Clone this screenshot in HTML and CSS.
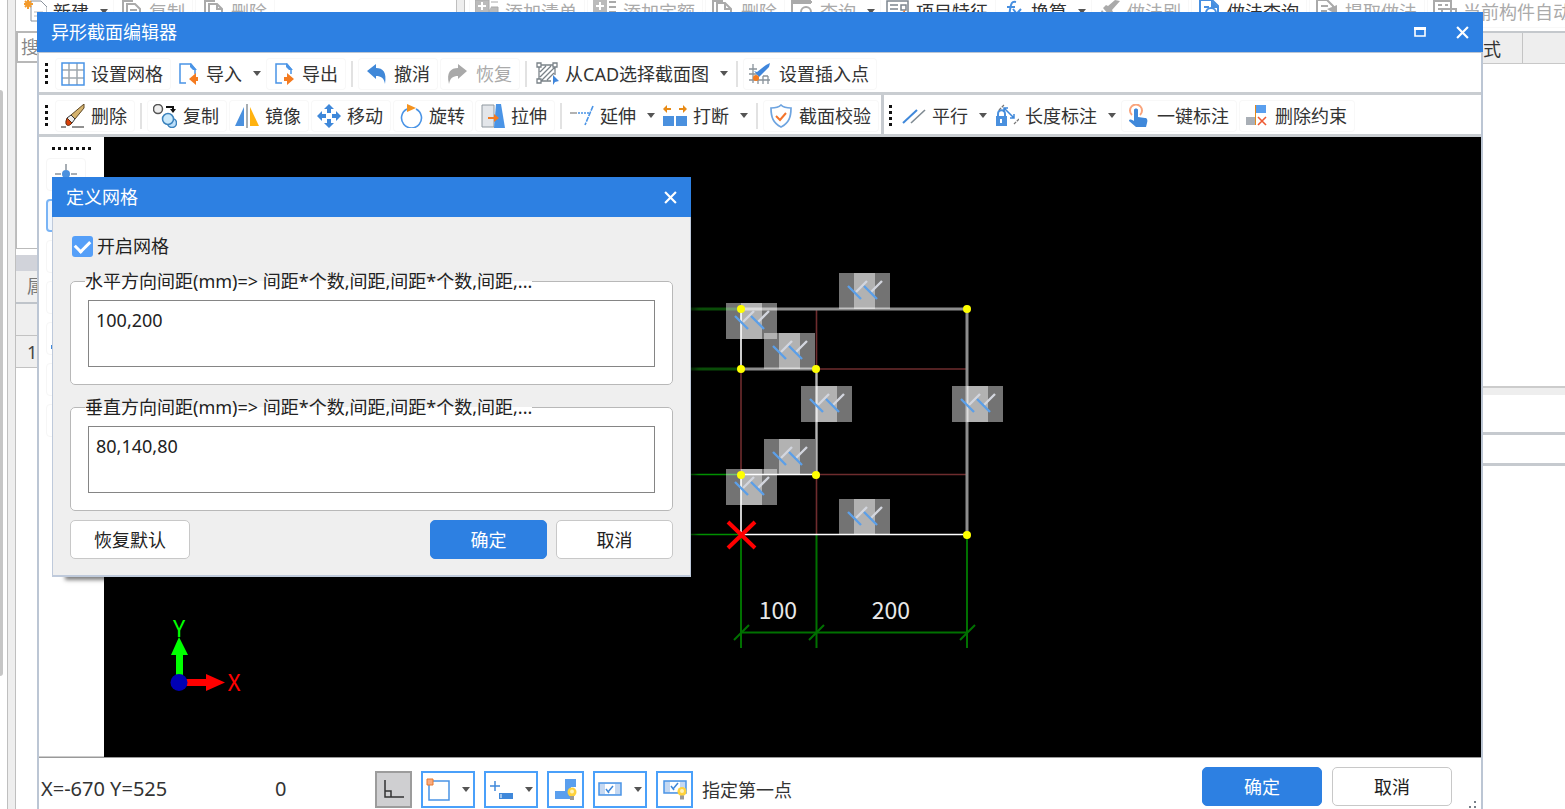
FILE: index.html
```html
<!DOCTYPE html>
<html lang="zh-CN">
<head>
<meta charset="utf-8">
<title>异形截面编辑器</title>
<link rel="stylesheet" href="styles.css">
</head>
<body>
<svg class="defs" aria-hidden="true">
  <symbol id="caret" viewBox="0 0 8 5"><path d="M0 0h8L4 5z" fill="#555"/></symbol>
  <symbol id="close" viewBox="0 0 12 12"><path d="M1 1l10 10M11 1L1 11" stroke="#fff" stroke-width="2"/></symbol>
  <symbol id="bulb" viewBox="0 0 10 14"><circle cx="5" cy="5" r="4.5" fill="#ffd23c"/><circle cx="5" cy="4.5" r="2" fill="#fff3b8"/><path d="M3 9h4v4H3z" fill="#999"/></symbol>
  <symbol id="mark" viewBox="0 0 51 36">
    <path d="M0 0h51v36H0z" fill="#fff" fill-opacity=".45"/><path d="M15 0h21v36H15z" fill="#fff" fill-opacity=".45"/>
    <path d="M17 19L28 8M32 19L43 8" stroke="#d3d6de" stroke-width="2.4"/>
    <path d="M9 13l13 13M25 13l13 13" stroke="#5c9fe8" stroke-width="2.4"/>
  </symbol>
</svg>

<main class="desktop">
  <div class="rail"><div class="thumb"></div></div>
  <div class="splitter"></div>
  <section class="left-pane">
    <div class="back-tools">
      <button class="tool drop"><svg class="ic" viewBox="0 0 24 24"><path d="M8 1h10l6 6v14H8z" fill="#fff" stroke="#8a929c"/><path d="M11 12h9M11 16h9" stroke="#bbb"/><path d="M5 0v9M1 4h9M2 1l6 6M8 1L2 7" stroke="#f39a2b" stroke-width="2"/></svg>新建<svg class="caret"><use href="#caret"/></svg></button>
      <button class="tool off"><svg class="ic" viewBox="0 0 24 24"><path d="M4 15V1h10M8 4h8l5 5v12H8zM11 10h7M11 14h7" fill="none" stroke="#aaa" stroke-width="2"/></svg>复制</button>
      <button class="tool off"><svg class="ic" viewBox="0 0 24 24"><path d="M4 15V1h10M8 4h8l5 5v12H8zM16 4v5h5" fill="none" stroke="#aaa" stroke-width="2"/></svg>删除</button>
    </div>
    <div class="search">搜</div>
    <div class="list"></div>
    <div class="prop-bar"></div>
    <div class="prop-title">属性</div>
    <div class="prop-row"></div>
    <div class="prop-row last">1</div>
  </section>
  <div class="splitter"></div>
  <section class="right-pane">
    <div class="back-tools">
      <button class="tool off"><svg class="ic" viewBox="0 0 24 24"><path d="M0 0h14v13H0zM16 2h7M16 7h7v12H8" fill="#bbb" stroke="#aaa"/><path d="M7 2v8M3 6h8" stroke="#fff" stroke-width="2"/></svg>添加清单</button>
      <button class="tool off"><svg class="ic" viewBox="0 0 24 24"><path d="M0 0h14v13H0z" fill="#bbb"/><path d="M16 2h7M16 7h7M16 12h7" stroke="#aaa" stroke-width="2"/><path d="M7 2v8M3 6h8" stroke="#fff" stroke-width="2"/></svg>添加定额</button>
      <button class="tool off"><svg class="ic" viewBox="0 0 24 24"><path d="M2 15V1h10M6 3h8l6 6v12H6zM14 3v6h6" fill="none" stroke="#aaa" stroke-width="2"/></svg>删除</button>
      <button class="tool off drop"><svg class="ic" viewBox="0 0 24 24"><path d="M2 20V2h20" fill="none" stroke="#aaa" stroke-width="2"/><path d="M1 0h20v4H1z" fill="#aaa"/><circle cx="16" cy="12" r="5" fill="none" stroke="#aaa" stroke-width="2"/></svg>查询<svg class="caret"><use href="#caret"/></svg></button>
      <button class="tool"><svg class="ic" viewBox="0 0 24 24"><path d="M1 1h21v18H1zM4 5h8M4 9h8M15 5h5v5h-5z" fill="#fff" stroke="#7c858f" stroke-width="1.5"/><path d="M14 14l5-4v8z" fill="#f08030"/></svg>项目特征</button>
      <button class="tool drop"><svg class="ic" viewBox="0 0 24 24"><path d="M15 2c-4-1-5 1-6 8s-2 9-5 8M6 7h8M12 9l7 9M20 9l-8 9" fill="none" stroke="#478fe0" stroke-width="2"/></svg>换算<svg class="caret"><use href="#caret"/></svg></button>
      <button class="tool off"><svg class="ic" viewBox="0 0 24 24"><path d="M23 1l-5-1-7 6-2-1-3 3 6 7 4-3-1-2zM5 10l5 6-5 3H0z" fill="#aaa"/></svg>做法刷</button>
      <button class="tool"><svg class="ic" viewBox="0 0 24 24"><path d="M3 0h12l6 6v15H3zM7 7h5" fill="#fff" stroke="#478fe0" stroke-width="2"/><path d="M14 0l8 8h-8z" fill="#478fe0"/><circle cx="14" cy="13" r="5" fill="#fff" stroke="#478fe0" stroke-width="2"/></svg>做法查询</button>
      <button class="tool off"><svg class="ic" viewBox="0 0 24 24"><path d="M2 0h10l6 6v14H2zM6 6h7M6 11h6" fill="none" stroke="#aaa" stroke-width="2"/><path d="M12 9l10-4v10z" fill="#aaa"/></svg>提取做法</button>
      <button class="tool off"><svg class="ic" viewBox="0 0 24 24"><path d="M1 1h17v13H1zM5 5h4M12 5h3M5 9h4M9 9h14v11H9zM13 14h7" fill="#fff" stroke="#aaa" stroke-width="2"/></svg>当前构件自动</button>
    </div>
    <div class="grid-head"><span class="col">式</span><span class="col end"></span></div>
    <div class="grid-body"></div>
    <div class="grid-gap"></div>
    <div class="sub-tools"></div>
    <div class="sub-head"></div>
  </section>
</main>

<section class="editor" aria-label="异形截面编辑器">
  <header class="title">
    <h1>异形截面编辑器</h1>
    <button class="win" aria-label="最大化"><svg width="12" height="12" viewBox="0 0 12 12"><path d="M1 2h10v8H1z" fill="none" stroke="#fff" stroke-width="1.6"/><path d="M0 1h12v3H0z" fill="#fff"/></svg></button>
    <button class="win" aria-label="关闭"><svg width="13" height="13"><use href="#close"/></svg></button>
  </header>
  <div class="frame">
    <div class="bar">
      <div class="group">
        <i class="grip"></i>
        <button class="tool"><svg class="ic" viewBox="0 0 24 24"><path d="M8 1v22M16 1v22M1 8h22M1 16h22" stroke="#a0a8ae" stroke-width="1.5"/><path d="M1 1h22v22H1z" fill="none" stroke="#4a94e6" stroke-width="1.5"/></svg>设置网格</button>
        <button class="tool drop"><svg class="ic" viewBox="0 0 24 24"><path d="M10 21H4V2h11l4 5v5" fill="none" stroke="#4a94e6" stroke-width="1.5"/><path d="M14 1l7 7h-4l-3-3z" fill="#4a94e6"/><path d="M13 17l7-6v4h2v4h-2v4z" fill="#f47b20"/></svg>导入<svg class="caret"><use href="#caret"/></svg></button>
        <button class="tool"><svg class="ic" viewBox="0 0 24 24"><path d="M10 21H4V2h11l4 5v5" fill="none" stroke="#4a94e6" stroke-width="1.5"/><path d="M14 1l7 7h-4l-3-3z" fill="#4a94e6"/><path d="M22 17l-7-6v4h-3v4h3v4z" fill="#f47b20"/></svg>导出</button>
        <i class="sep"></i>
        <button class="tool"><svg class="ic" viewBox="0 0 24 24"><path d="M3 9l9-7v4c7 0 11 4 9 16-1-6-4-8-9-8v3z" fill="#4088d8"/></svg>撤消</button>
        <button class="tool off"><svg class="ic" viewBox="0 0 24 24"><path d="M21 9l-9-7v4C5 6 0 10 3 22c1-6 4-8 9-8v3z" fill="#a9a9a9"/></svg>恢复</button>
        <i class="sep"></i>
        <button class="tool drop"><svg class="ic" viewBox="0 0 24 24"><path d="M4 3h16v10M4 3v16h12M5 10l6-6M5 15L16 4M6 19L20 5M12 18l7-7" fill="none" stroke="#7a8288" stroke-width="1.3"/><path d="M2 1h4v4H2zM18 1h4v4h-4zM2 17h4v4H2z" fill="#fff" stroke="#7a8288" stroke-width="1.3"/><path d="M18 13l6 6-4 1-2 3z" fill="#3f86dc"/></svg>从CAD选择截面图<svg class="caret"><use href="#caret"/></svg></button>
        <i class="sep"></i>
        <button class="tool"><svg class="ic" viewBox="0 0 24 24"><path d="M4 2v19M0 7h8M0 12h8M0 18h21M9 14v8M14 14v8M19 14v8M14 14h5" stroke="#89939b" stroke-width="1.3"/><path d="M17 3l4-2-1 4-10 10-5-6 3 1z" fill="#3f86dc"/><circle cx="7" cy="16" r="3" fill="#f47b20"/></svg>设置插入点</button>
      </div>
    </div>
    <div class="bar">
      <div class="group">
        <i class="grip"></i>
        <button class="tool"><svg class="ic" viewBox="0 0 24 24"><path d="M23 0v4l-9 11-4-4z" fill="#d5b36e" stroke="#5d4724"/><path d="M10 11l4 4-3 4-5-5z" fill="#eee" stroke="#333"/><path d="M6 14l5 5c-3 4-7 3-6-2z" fill="#d9420b" stroke="#5b2b10"/><path d="M0 23h5M11 23h12" stroke="#222"/></svg>删除</button>
        <i class="sep"></i>
        <button class="tool"><svg class="ic" viewBox="0 0 24 24"><circle cx="5" cy="5" r="4.5" fill="#eee" stroke="#555" stroke-width="1.5"/><path d="M13 3h7v3" fill="none" stroke="#111" stroke-width="2"/><path d="M17 5h6l-3 4z" fill="#111"/><circle cx="19" cy="19" r="4.5" fill="#bfe0fa" stroke="#3c83bd" stroke-width="1.5"/><circle cx="15" cy="15" r="5.500" fill="#c9e9fc" stroke="#3c83bd" stroke-width="1.5"/></svg>复制</button>
        <button class="tool"><svg class="ic" viewBox="0 0 24 24"><path d="M9 3v19H0z" fill="#4a90de"/><path d="M15 3v19h9z" fill="#ffb20f"/><path d="M12 0v24" stroke="#8a9299" stroke-width="1.5"/></svg>镜像</button>
        <button class="tool"><svg class="ic" viewBox="0 0 24 24"><path d="M12 0l5 5h-3v4h-4V5H7zM12 24l5-5h-3v-4h-4v4H7zM0 12l5-5v3h4v4H5v3zM24 12l-5-5v3h-4v4h4v3z" fill="#3f88da"/></svg>移动</button>
        <button class="tool"><svg class="ic" viewBox="0 0 24 24"><path d="M17 5a10 10 0 1 1-9 0" fill="none" stroke="#4a94e6" stroke-width="1.6"/><path d="M8 0l9 4-9 4z" fill="#f49320"/></svg>旋转</button>
        <button class="tool"><svg class="ic" viewBox="0 0 24 24"><path d="M1 1h12v22H1z" fill="#e3e6ea" stroke="#8f989f"/><path d="M15 0h5l4 24H13z" fill="#4a94e6"/><path d="M7 14h7" stroke="#f47b20" stroke-width="2"/><path d="M13 10l5 4-5 4z" fill="#f47b20"/></svg>拉伸</button>
        <i class="sep"></i>
        <button class="tool drop"><svg class="ic" viewBox="0 0 24 24"><path d="M0 9h7" stroke="#999" stroke-width="1.500"/><path d="M8 9h12" stroke="#4a94e6" stroke-width="1.500" stroke-dasharray="2 1"/><path d="M23 2l-8 19" stroke="#4a94e6" stroke-width="1.6" stroke-dasharray="5 1"/></svg>延伸<svg class="caret"><use href="#caret"/></svg></button>
        <button class="tool drop"><svg class="ic" viewBox="0 0 24 24"><path d="M0 12h11v10H0zM13 12h11v10H13z" fill="#4a90de"/><path d="M0 5l4-4v3h4v2H4v3zM24 5l-4-4v3h-4v2h4v3z" fill="#e88a15"/></svg>打断<svg class="caret"><use href="#caret"/></svg></button>
        <i class="sep"></i>
        <button class="tool"><svg class="ic" viewBox="0 0 24 24"><path d="M12 1c3 3 6 3 10 3 0 9-2 15-10 19C4 19 2 13 2 4c4 0 7 0 10-3z" fill="#fff" stroke="#6ea4e0" stroke-width="1.7"/><path d="M7 12l4 4 6-7" fill="none" stroke="#f4742c" stroke-width="2"/></svg>截面校验</button>
      </div>
      <div class="group">
        <i class="grip"></i>
        <button class="tool drop"><svg class="ic" viewBox="0 0 24 24"><path d="M1 19L15 6" stroke="#3f88da" stroke-width="2"/><path d="M9 19L23 6" stroke="#7f8a92" stroke-width="1.6"/></svg>平行<svg class="caret"><use href="#caret"/></svg></button>
        <button class="tool drop"><svg class="ic" viewBox="0 0 24 24"><path d="M1 12h11v10H1z" fill="#4a90de"/><path d="M3 12v-2c0-5 7-5 7 0v2" fill="none" stroke="#4a90de" stroke-width="2"/><path d="M6 15v4" stroke="#fff" stroke-width="2"/><path d="M9 4l10 10M9 8V4h4M19 10v4h-4" fill="none" stroke="#3f88da" stroke-width="1.5"/><path d="M4 6l5-5M19 20l5-5" stroke="#777" stroke-width="1.3" stroke-dasharray="3 1"/></svg>长度标注<svg class="caret"><use href="#caret"/></svg></button>
        <button class="tool"><svg class="ic" viewBox="0 0 24 24"><path d="M5 11a6 6 0 1 1 8 0" fill="none" stroke="#f9a47c" stroke-width="2"/><path d="M7 6c0-2 4-2 4 0v7l7 1c2 0 3 2 2 5l-1 4H9l-7-6c0-2 2-2 5 0z" fill="#3f88da"/></svg>一键标注</button>
        <button class="tool"><svg class="ic" viewBox="0 0 24 24"><path d="M1 13h10v8H1z" fill="#a9afb6"/><path d="M11 1h10v8H11z" fill="#5a9fee"/><path d="M10.5 1v20" stroke="#e58a1a"/><path d="M13 13l8 8M21 13l-8 8" stroke="#ee5a32" stroke-width="1.6"/></svg>删除约束</button>
      </div>
    </div>
    <div class="work">
      <nav class="side" aria-label="捕捉">
        <i class="grip flat"></i>
        <button class="snap" aria-label="点"><svg class="ic" viewBox="0 0 24 24"><path d="M12 1v6M1 11h6M17 11h6M12 16v7" stroke="#8a929a" stroke-width="1.5"/><circle cx="12" cy="11" r="4" fill="#4a90de"/></svg></button>
        <button class="snap on" aria-label="直线"></button>
        <button class="snap" aria-label="弧线"></button>
        <button class="snap" aria-label="圆"></button>
        <button class="snap" aria-label="矩形"><svg class="bar-ic" viewBox="0 0 30 24"><path d="M0 18h4v4H0zM26 2h4v4h-4z" fill="#3f88da"/><path d="M3 19L27 4" stroke="#3f88da"/></svg></button>
        <button class="snap" aria-label="多边形"></button>
        <button class="snap" aria-label="椭圆"></button>
      </nav>
      <svg class="canvas" role="img" aria-label="截面图">
        <g transform="translate(-104 -137)" fill="none">
          <g stroke="#0a4c08" stroke-width="3"><path d="M600 309h141M600 369h141"/></g>
          <g stroke="#009000" stroke-width="1.4"><path d="M600 474.500h141M600 534.500h141"/></g>
          <g stroke="#007000" stroke-width="2"><path d="M741 535v113M816.500 535v113M967 535v113M741 632.500h226"/><path d="M734 640l15-15M809 640l15-15M960 640l15-15"/></g>
          <g stroke="#6e2c2e" stroke-width="1.600"><path d="M741 369v106M816.500 309v60M816.500 475v60M816 369h151M816 474.500h151"/></g>
          <g stroke="#8c8c8c" stroke-width="3"><path d="M741 309h226v226M741 369h75"/></g>
          <g stroke="#b5b5b5" stroke-width="2.400"><path d="M816.500 369v106"/></g>
          <g stroke="#fff" stroke-width="1.600"><path d="M741 309v60M741 475v60M741 474.500h75M741 534.500h226"/></g>
          <use href="#mark" x="839" y="273" width="51" height="36"/>
          <use href="#mark" x="726" y="303" width="51" height="36"/>
          <use href="#mark" x="764" y="333" width="51" height="36"/>
          <use href="#mark" x="801" y="386" width="51" height="36"/>
          <use href="#mark" x="952" y="386" width="51" height="36"/>
          <use href="#mark" x="764" y="439" width="51" height="36"/>
          <use href="#mark" x="726" y="469" width="51" height="36"/>
          <use href="#mark" x="839" y="499" width="51" height="36"/>
          <g fill="#ff0"><circle cx="741" cy="309" r="4"/><circle cx="967" cy="309" r="4"/><circle cx="741" cy="369" r="4"/><circle cx="816" cy="369" r="4"/><circle cx="741" cy="475" r="4"/><circle cx="816" cy="475" r="4"/><circle cx="967" cy="535" r="4"/></g>
          <path d="M728 522l27 26M755 522l-27 26" stroke="#f00" stroke-width="4"/>
          <g class="dims"><text x="778" y="619">100</text><text x="891" y="619">200</text></g>
          <path d="M176 676v-21h-5l8-18 9 18h-5v21z" fill="#0f0"/>
          <path d="M186 679h20v-5l19 8.500-19 8.500v-5h-20z" fill="#f00"/>
          <circle cx="179" cy="682.500" r="8.500" fill="#0000b4"/>
          <g class="axes"><text class="y" x="179" y="637">Y</text><text class="x" x="234" y="691">X</text></g>
        </g>
      </svg>
    </div>
    <footer class="status">
      <output class="xy">X=-670 Y=525</output>
      <output class="num">0</output>
      <div class="modes">
        <button class="mode pressed" aria-label="正交"><svg class="ic" viewBox="0 0 24 24"><path d="M3 2v17h19M3 13h6v6" fill="none" stroke="#333" stroke-width="1.5"/></svg></button>
        <button class="mode more" aria-label="矩形捕捉"><svg class="ic" viewBox="0 0 24 24"><path d="M3 3h20v19H3z" fill="#fff" stroke="#4a94e6" stroke-width="1.5"/><path d="M1 1h6v6H1z" fill="#f9ab80" stroke="#e8792c"/></svg><svg class="caret"><use href="#caret"/></svg></button>
        <button class="mode more" aria-label="动态输入"><svg class="ic" viewBox="0 0 24 24"><path d="M6 3v10M1 8h10" stroke="#3f88da" stroke-width="1.5"/><path d="M10 15h14v6H10z" fill="#3f88da"/><path d="M12 16v4" stroke="#fff"/></svg><svg class="caret"><use href="#caret"/></svg></button>
        <button class="mode" aria-label="约束显示"><svg class="ic" viewBox="0 0 24 24"><path d="M11 1h11v8h-5v12H1v-8h10z" fill="#5a9fee"/><use href="#bulb" x="13" y="9" width="10" height="14"/></svg></button>
        <button class="mode more" aria-label="自动约束"><svg class="ic" viewBox="0 0 24 24"><path d="M1 5h22v12H1z" fill="#c4d8f2" stroke="#4a94e6" stroke-width="1.5"/><path d="M7 6h10v10H7z" fill="#fff"/><path d="M8 11l3 4M10 14l5-6" stroke="#3f88da" stroke-width="1.5"/></svg><svg class="caret"><use href="#caret"/></svg></button>
        <button class="mode" aria-label="约束提示"><svg class="ic" viewBox="0 0 24 24"><path d="M1 3h22v12H1z" fill="#c4d8f2" stroke="#4a94e6" stroke-width="1.5"/><path d="M7 4h10v10H7z" fill="#fff"/><path d="M8 8l3 4M10 11l5-6" stroke="#3f88da" stroke-width="1.5"/><use href="#bulb" x="14" y="8" width="10" height="15"/></svg></button>
        <span>指定第一点</span>
      </div>
      <div class="actions">
        <button class="btn primary">确定</button>
        <button class="btn">取消</button>
      </div>
      <svg class="resize" width="9" height="9" viewBox="0 0 9 9"><path d="M6 1h2v2H6zM6 6h2v2H6zM1 6h2v2H1z" fill="#777f88"/></svg>
    </footer>
  </div>
</section>

<form class="dialog" role="dialog" aria-label="定义网格">
  <header class="title">
    <h2>定义网格</h2>
    <button type="button" class="win" aria-label="关闭"><svg width="13" height="13"><use href="#close"/></svg></button>
  </header>
  <div class="dialog-body">
    <label class="check"><input type="checkbox" checked>开启网格</label>
    <fieldset>
      <legend><label for="hs">水平方向间距(mm)=&gt; 间距*个数,间距,间距*个数,间距,...</label></legend>
      <textarea id="hs">100,200</textarea>
    </fieldset>
    <fieldset>
      <legend><label for="vs">垂直方向间距(mm)=&gt; 间距*个数,间距,间距*个数,间距,...</label></legend>
      <textarea id="vs">80,140,80</textarea>
    </fieldset>
    <div class="foot">
      <button type="button" class="btn reset">恢复默认</button>
      <button type="button" class="btn primary">确定</button>
      <button type="button" class="btn">取消</button>
    </div>
  </div>
</form>
</body>
</html>
```

FILE: styles.css
```css
* { box-sizing: border-box; }
html, body { height: 100%; }
body {
  margin: 0;
  overflow: hidden;
  position: relative;
  background: #fff;
  color: #333;
  font: 18px/24px "Noto Sans", "Noto Sans CJK SC", sans-serif;
}
button, textarea { font: inherit; color: inherit; }
button { padding: 0; border: 0; background: none; }
h1, h2 { margin: 0; font-size: 18px; font-weight: 400; }
.defs { position: absolute; width: 0; height: 0; }

/* Shared toolbar parts */
.tool {
  display: flex;
  flex: none;
  align-items: center;
  gap: 6px;
  height: 32px;
  padding: 0 8px 0 6px;
  border-radius: 4px;
  box-shadow: inset 0 0 0 1px #f8f8f8;
  white-space: nowrap;
}
.tool.drop { padding: 0 3px; box-shadow: none; }
.tool.off { color: #aaa; }
.ic { width: 24px; height: 24px; flex: none; }
.caret { width: 8px; height: 5px; flex: none; margin-left: 5px; }
.sep {
  flex: none;
  width: 2px;
  height: 26px;
  margin: 0 3px;
  background: #e2e2e2;
}

/* Application behind the editor */
.desktop { display: flex; height: 100%; overflow: hidden; }
.rail { flex: none; width: 7px; padding: 90px 4px 133px 0; }
.thumb { height: 100%; background: #c6c6c6; border-radius: 0 4px 4px 0; }
.splitter { flex: none; width: 9px; background: #eee; border: solid #bfbfbf; border-width: 0 1px; }
.left-pane { flex: 0 0 440px; }
.right-pane { flex: 1; min-width: 0; }
.back-tools {
  display: flex;
  align-items: center;
  gap: 2px;
  height: 31px;
  padding: 0 4px 8px;
  overflow: hidden;
}
.search { height: 32px; padding: 2px 3px; border: 2px solid #b8b8b8; color: #888; }
.list { height: 186px; border: solid #bbb; border-width: 0 1px 1px; }
.prop-bar { height: 16px; margin-top: 6px; background: #d1d3da; }
.prop-title, .prop-row { background: #efefef; border-bottom: 1px solid #c2c2c2; color: #777; }
.prop-title { height: 33px; padding: 3px 11px; border-bottom: 2px solid #bfc4ca; }
.prop-row { height: 32px; padding: 4px 11px; }
.prop-row.last { color: #444; }
.grid-head {
  display: flex;
  height: 33px;
  border-top: 2px solid #c4c8cc;
  border-bottom: 1px solid #c8c8c8;
  background: #eee;
}
.col { flex: 1; padding: 4px 21px; border-right: 1px solid #c4c4c4; text-align: right; }
.col.end { flex: 0 0 42px; padding: 0; border: 0; }
.grid-body { height: 322px; }
.grid-gap { height: 9px; background: #eee; border-top: 2px solid #ccc; }
.sub-tools { height: 40px; border-bottom: 3px solid #c6cacf; }
.sub-head { height: 31px; border-bottom: 3px solid #c6cacf; }

/* Editor window */
.editor {
  position: absolute;
  inset: 12px 82px 0 37px;
  display: flex;
  flex-direction: column;
  background: #fff;
}
.title {
  display: flex;
  flex: none;
  align-items: center;
  height: 40px;
  padding: 0 14px;
  background: #2d80e2;
  color: #fff;
}
.title h1, .title h2 { flex: 1; }
.win { display: flex; justify-content: center; width: 14px; margin-left: 28px; }
.frame {
  display: flex;
  flex: 1;
  flex-direction: column;
  min-height: 0;
  border: solid #bcc6d4;
  border-width: 1px 2px 0;
}
.bar { display: flex; flex: none; height: 42px; border-bottom: 3px solid #c9cdd1; }
.group { display: flex; align-items: center; gap: 2px; padding: 2px 1px 0; }
.group + .group { margin-left: 1px; padding-left: 0; border-left: 3px solid #c6cacf; }
.grip {
  flex: none;
  width: 3px;
  height: 21px;
  margin: 0 5px;
  background: repeating-linear-gradient(#111 0 3px, transparent 3px 6px);
}
.grip.flat {
  width: 39px;
  height: 3px;
  margin: 0;
  background: repeating-linear-gradient(90deg, #111 0 3px, transparent 3px 6px);
}
.work { display: flex; flex: 1; min-height: 0; }
.side {
  display: flex;
  flex: 0 0 65px;
  flex-direction: column;
  align-items: center;
  gap: 8px;
  padding-top: 10px;
  border-bottom: 1px solid #ccc;
  overflow: hidden;
}
.snap {
  display: flex;
  flex: none;
  align-items: center;
  justify-content: center;
  width: 40px;
  height: 33px;
  margin-right: 12px;
  border: 1px solid #f6f6f6;
  border-radius: 4px;
}
.snap.on { border: 2px solid #7ab4f5; background: #eff6fe; }
.bar-ic { width: 30px; height: 24px; }
.canvas { flex: 1; min-width: 0; height: 100%; background: #000; }
.dims text, .axes text {
  fill: #e8e8e8;
  font: 23px "Noto Sans CJK SC", sans-serif;
  text-anchor: middle;
}
.axes .y { fill: #0f0; }
.axes .x { fill: #f00; }
.status {
  display: flex;
  flex: none;
  align-items: flex-start;
  height: 52px;
  padding: 0 4px 0 2px;
  border-top: 1px solid #999;
}
.xy, .num { margin-top: 19px; font-size: 20px; }
.xy { width: 234px; }
.num { width: 100px; }
.modes { display: flex; flex: 1; align-items: center; gap: 9px; margin-top: 13px; white-space: nowrap; }
.mode {
  display: flex;
  align-items: center;
  justify-content: center;
  gap: 7px;
  width: 37px;
  height: 37px;
  border: 2px solid #4aa0fa;
}
.mode.more { width: 54px; }
.mode.pressed { border-color: #9c9c9c; background: #cfcfd1; }
.actions { display: flex; gap: 10px; margin-top: 9px; }
.btn {
  width: 120px;
  height: 39px;
  border: 1px solid #c8c8c8;
  border-radius: 5px;
  background: #fff;
  color: #222;
}
.btn.primary { border-color: #2d80e2; background: #2d80e2; color: #fff; }
.resize { align-self: flex-end; margin-left: 16px; }

/* Grid definition dialog */
.dialog {
  position: absolute;
  top: 177px;
  left: 52px;
  width: 639px;
  background: #efefef;
  color: #222;
  box-shadow: 9px 7px 4px -4px rgba(0, 0, 0, .5);
}
.dialog-body { padding: 17px 17px 16px; border: solid #bfcadb; border-width: 0 1px 2px; }
.check { display: flex; align-items: center; gap: 4px; margin-left: 2px; }
.check input {
  width: 21px;
  height: 21px;
  margin: 0;
  appearance: none;
  border-radius: 3px;
  background: #559ff8;
  display: grid;
  place-items: center;
}
.check input::before {
  content: "";
  width: 12px;
  height: 7px;
  margin-top: -3px;
  border: solid #fff;
  border-width: 0 0 3px 3px;
  rotate: -45deg;
}
fieldset {
  min-width: 0;
  margin: 11px 0 0;
  padding: 7px 17px 17px;
  border: 1px solid #b8b8b8;
  border-radius: 5px;
  background: #fff;
}
fieldset + fieldset { margin-top: 10px; }
legend { margin-left: -3px; padding: 0; }
textarea {
  display: block;
  width: 100%;
  height: 67px;
  padding: 7px;
  border: 1px solid #858585;
  background: #fff;
  resize: none;
  outline: none;
}
.foot { display: flex; gap: 9px; margin-top: 9px; }
.foot .btn { width: 117px; }
.foot .reset { width: 120px; margin-right: auto; }
```
